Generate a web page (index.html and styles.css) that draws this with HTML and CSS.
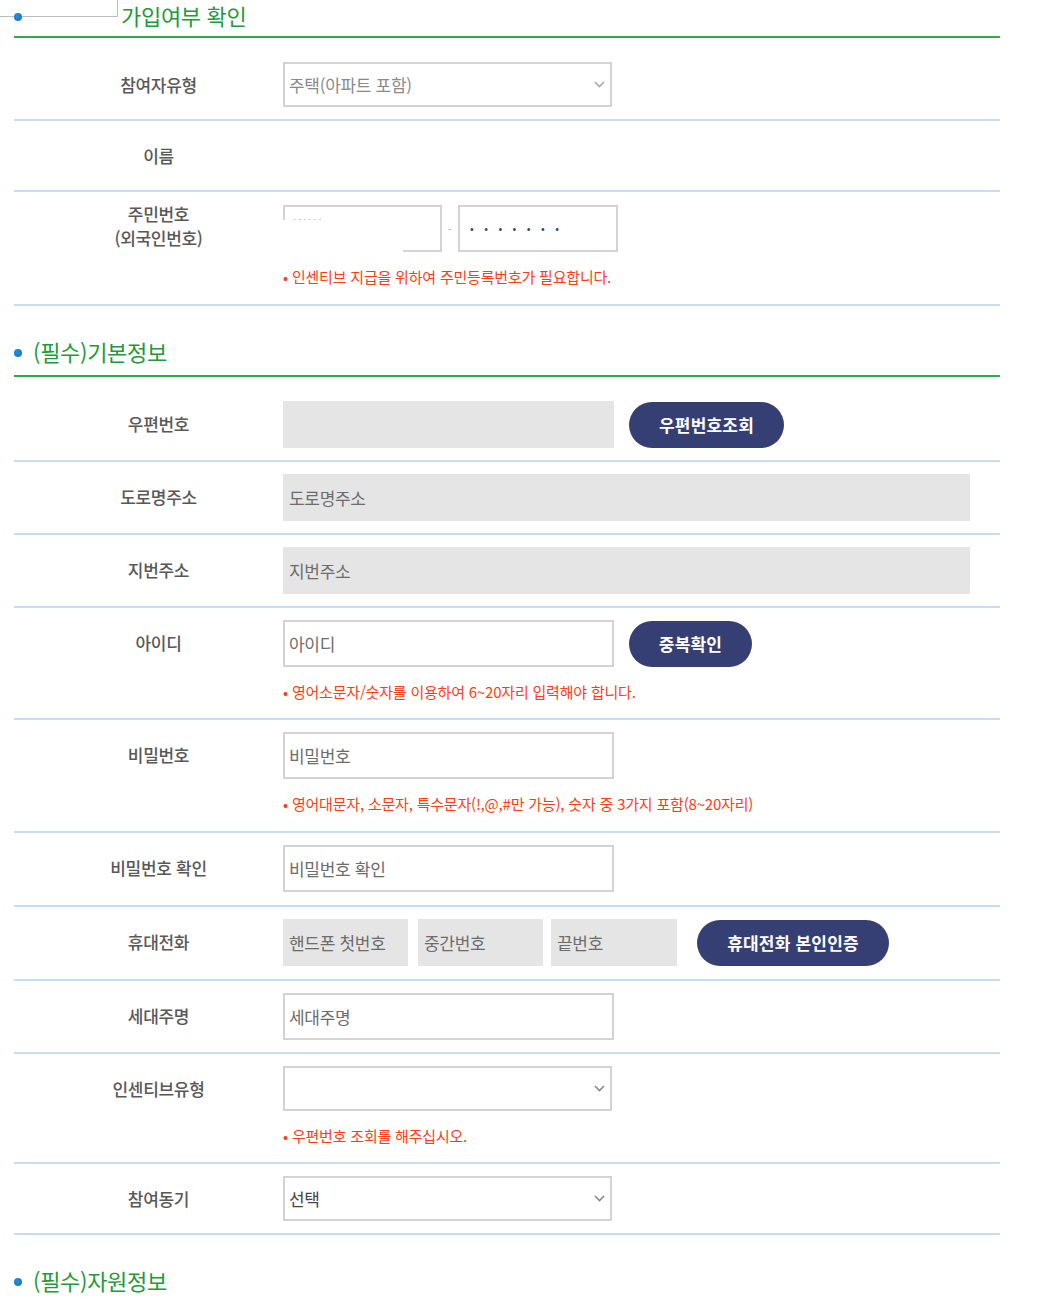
FILE: index.html
```html
<!DOCTYPE html>
<html lang="ko">
<head>
    <meta charset="UTF-8">
    <title>참여자 가입</title>
    <link rel="stylesheet" href="styles.css">
</head>
<body>
    <div class="page">
        <div class="scrap"></div>

        <h2 class="sec-title first"><span class="dot"></span>가입여부 확인</h2>

        <div class="row">
            <div class="label">참여자유형</div>
            <div class="field">
                <div class="select disabled">
                    <span>주택(아파트 포함)</span>
                    <svg width="11" height="7" viewBox="0 0 11 7"><path d="M1 1l4.5 4.5L10 1" fill="none" stroke="#aaa" stroke-width="1.6"/></svg>
                </div>
            </div>
        </div>

        <div class="row">
            <div class="label">이름</div>
            <div class="field"></div>
        </div>

        <div class="row noted jumin">
            <div class="label two">주민번호<br>(외국인번호)</div>
            <div class="field">
                <div class="line">
                    <div class="jumin-box">
                        <span class="jumin-front">• • • • • •</span>
                        <div class="mask"></div>
                    </div>
                    <span class="dash">-</span>
                    <div class="jumin-box back">• • • • • • •</div>
                </div>
                <p class="note">• 인센티브 지급을 위하여 주민등록번호가 필요합니다.</p>
            </div>
        </div>

        <h2 class="sec-title"><span class="dot"></span>(필수)기본정보</h2>

        <div class="row">
            <div class="label">우편번호</div>
            <div class="field line">
                <input class="input gray" type="text" readonly>
                <button class="btn zip">우편번호조회</button>
            </div>
        </div>

        <div class="row">
            <div class="label">도로명주소</div>
            <div class="field">
                <input class="input gray wide" type="text" placeholder="도로명주소" readonly>
            </div>
        </div>

        <div class="row">
            <div class="label">지번주소</div>
            <div class="field">
                <input class="input gray wide" type="text" placeholder="지번주소" readonly>
            </div>
        </div>

        <div class="row noted">
            <div class="label">아이디</div>
            <div class="field">
                <div class="line">
                    <input class="input" type="text" placeholder="아이디">
                    <button class="btn dup">중복확인</button>
                </div>
                <p class="note">• 영어소문자/숫자를 이용하여 6~20자리 입력해야 합니다.</p>
            </div>
        </div>

        <div class="row noted tall">
            <div class="label">비밀번호</div>
            <div class="field">
                <input class="input" type="text" placeholder="비밀번호">
                <p class="note">• 영어대문자, 소문자, 특수문자(!,@,#만 가능), 숫자 중 3가지 포함(8~20자리)</p>
            </div>
        </div>

        <div class="row tall">
            <div class="label">비밀번호 확인</div>
            <div class="field">
                <input class="input" type="text" placeholder="비밀번호 확인">
            </div>
        </div>

        <div class="row tall">
            <div class="label">휴대전화</div>
            <div class="field line">
                <input class="input gray ph" type="text" placeholder="핸드폰 첫번호" readonly>
                <input class="input gray ph mid" type="text" placeholder="중간번호" readonly>
                <input class="input gray ph last" type="text" placeholder="끝번호" readonly>
                <button class="btn phone">휴대전화 본인인증</button>
            </div>
        </div>

        <div class="row">
            <div class="label">세대주명</div>
            <div class="field">
                <input class="input" type="text" placeholder="세대주명">
            </div>
        </div>

        <div class="row noted">
            <div class="label">인센티브유형</div>
            <div class="field">
                <div class="select">
                    <span></span>
                    <svg width="11" height="7" viewBox="0 0 11 7"><path d="M1 1l4.5 4.5L10 1" fill="none" stroke="#888" stroke-width="1.6"/></svg>
                </div>
                <p class="note">• 우편번호 조회를 해주십시오.</p>
            </div>
        </div>

        <div class="row">
            <div class="label">참여동기</div>
            <div class="field">
                <div class="select">
                    <span>선택</span>
                    <svg width="11" height="7" viewBox="0 0 11 7"><path d="M1 1l4.5 4.5L10 1" fill="none" stroke="#888" stroke-width="1.6"/></svg>
                </div>
            </div>
        </div>

        <h2 class="sec-title"><span class="dot"></span>(필수)자원정보</h2>
    </div>
</body>
</html>
```

FILE: styles.css
```css
html {
    overflow: hidden;
}
body {
    margin: 0;
    background-color: #fff;
    font-family: "Noto Sans CJK KR", "Noto Sans", sans-serif;
    color: #4a4a4a;
}
.page {
    position: relative;
    width: 986px;
    margin-left: 14px;
}
/* leftover box on top-left corner */
.scrap {
    position: absolute;
    left: -14px;
    top: 0;
    width: 117px;
    height: 16px;
    border-right: 1px solid #bdbdbd;
    border-bottom: 1px solid #bdbdbd;
    background-color: #fff;
}
.sec-title {
    position: relative;
    display: flex;
    align-items: center;
    margin: 32px 0 0;
    padding-bottom: 11px;
    border-bottom: 2px solid #2fab48;
    font-size: 22px;
    font-weight: normal;
    line-height: 26px;
    letter-spacing: -0.3px;
    color: #22993a;
}
.sec-title.first {
    margin-top: 0;
    padding-bottom: 5px;
    line-height: 31px;
}
.dot {
    flex-shrink: 0;
    width: 8px;
    height: 8px;
    margin: 3px 11px 0 0;
    border-radius: 50%;
    background: radial-gradient(circle at 40% 40%, #1e8fe6, #1a7cc9 60%, #2ba24a);
}
.first .dot {
    margin-right: 99px;
}
.row {
    display: flex;
    padding: 12px 0 12px;
    border-bottom: 2px solid #c9ddee;
}
.sec-title + .row {
    padding-top: 24px;
}
.row.noted {
    padding-bottom: 18px;
}
.row.tall {
    padding-bottom: 13px;
}
.row.noted.tall {
    padding-bottom: 19px;
}
.row.jumin {
    padding-top: 13px;
    padding-bottom: 19px;
}
.label {
    flex-shrink: 0;
    width: 269px;
    padding-left: 20px;
    box-sizing: border-box;
    text-align: center;
    font-size: 17px;
    font-weight: 500;
    line-height: 45px;
    letter-spacing: -0.3px;
    color: #585858;
}
.label.two {
    line-height: 24px;
    margin-top: -3px;
}
.field {
    flex: 1;
}
.line {
    display: flex;
    align-items: center;
}
.input {
    display: block;
    width: 331px;
    height: 47px;
    box-sizing: border-box;
    margin: 0;
    padding: 0 4px;
    border: 2px solid #d3d3d3;
    background-color: #fff;
    font-family: inherit;
    font-size: 17px;
    letter-spacing: -0.3px;
    color: #555;
    outline: none;
}
.input::placeholder {
    color: #6c6c6c;
}
.input.gray {
    border-color: #e5e5e5;
    background-color: #e5e5e5;
}
.input.wide {
    width: 687px;
}
.input.ph {
    width: 125px;
}
.input.mid {
    margin-left: 10px;
}
.input.last {
    width: 126px;
    margin-left: 8px;
}
.select {
    display: flex;
    align-items: center;
    justify-content: space-between;
    width: 329px;
    height: 45px;
    box-sizing: border-box;
    padding: 0 5px 0 4px;
    border: 2px solid #d3d3d3;
    font-size: 17px;
    letter-spacing: -0.3px;
    color: #444;
}
.select.disabled {
    color: #8a8a8a;
}
.btn {
    height: 46px;
    margin-left: 15px;
    padding: 0;
    border: none;
    border-radius: 23px;
    background-color: #363f73;
    color: #fff;
    font-family: inherit;
    font-size: 17px;
    font-weight: bold;
    letter-spacing: 0.2px;
}
.btn.zip {
    width: 155px;
}
.btn.dup {
    width: 123px;
}
.btn.phone {
    width: 192px;
    margin-left: 20px;
}
.jumin-box {
    position: relative;
    width: 159px;
    height: 47px;
    box-sizing: border-box;
    border: 2px solid #d3d3d3;
}
.jumin-front {
    display: block;
    padding: 8px 0 0 8px;
    font-size: 9px;
    line-height: 10px;
    color: #c4c4c4;
}
.mask {
    position: absolute;
    left: -3px;
    top: 13px;
    width: 121px;
    height: 34px;
    background-color: #fff;
}
.jumin-box.back {
    width: 160px;
    padding-left: 10px;
    font-size: 11px;
    line-height: 43px;
    letter-spacing: 4px;
    color: #3a4a6c;
}
.dash {
    width: 16px;
    text-align: center;
    font-size: 11px;
    color: #aaa;
}
.note {
    margin: 17px 0 0;
    font-size: 15px;
    line-height: 16px;
    letter-spacing: -0.2px;
    color: #ff3c14;
}
```
